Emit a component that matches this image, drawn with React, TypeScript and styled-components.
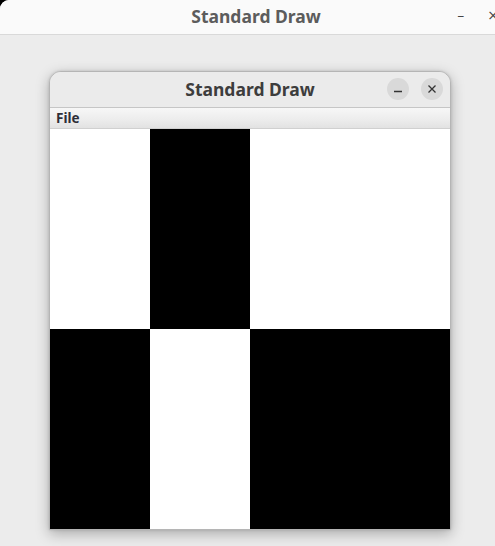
import React from "react";
import styled, { createGlobalStyle } from "styled-components";

const Global = createGlobalStyle`
  html, body { margin: 0; padding: 0; background: #000; overflow: hidden; }
  * { box-sizing: border-box; }
`;

const Screen = styled.div`
  width: 495px;
  height: 546px;
  background: #000;
`;

const Frame = styled.div`
  width: 100%;
  height: 100%;
  background: #ececec;
  border-top-left-radius: 9px;
  overflow: hidden;
  display: flex;
  flex-direction: column;
`;

const OuterBar = styled.div`
  height: 35px;
  flex: none;
  background: #fafafa;
  border-bottom: 1px solid #d9d9d9;
  position: relative;
  display: flex;
  align-items: center;
  justify-content: center;
  padding-left: 17px;
`;

const OuterTitle = styled.div`
  font-family: "Noto Sans", "DejaVu Sans", sans-serif;
  font-weight: 700;
  font-size: 17.5px;
  color: #5c5c5c;
  letter-spacing: 0px;
  margin-top: -2px;
`;

const OuterControls = styled.div`
  position: absolute;
  right: -4px;
  top: 7px;
  display: flex;
  gap: 23px;
  font-family: "DejaVu Sans", sans-serif;
  font-size: 14px;
  color: #444;
`;

const Desktop = styled.div`
  flex: 1;
  padding: 36px 0 0 49px;
`;

const Window = styled.div`
  width: 402px;
  border: 1px solid #b5b5b5;
  border-radius: 12px 12px 0 0;
  background: #ebebeb;
  box-shadow: 0 4px 14px rgba(0, 0, 0, 0.28), 0 0 3px rgba(0, 0, 0, 0.15);
  overflow: hidden;
`;

const TitleBar = styled.div`
  height: 36px;
  background: #ebebeb;
  border-bottom: 1px solid #c6c6c6;
  position: relative;
  display: flex;
  align-items: center;
  justify-content: center;
`;

const Title = styled.div`
  font-family: "Noto Sans", "DejaVu Sans", sans-serif;
  font-weight: 700;
  font-size: 17.5px;
  color: #3d3d3d;
  letter-spacing: 0px;
  margin-top: -1px;
`;

const Controls = styled.div`
  position: absolute;
  right: 7px;
  top: 6px;
  display: flex;
  gap: 12px;
`;

const CircleButton = styled.div`
  width: 22px;
  height: 22px;
  border-radius: 50%;
  background: #d9d9d9;
  display: flex;
  align-items: center;
  justify-content: center;
`;

const MenuBar = styled.div`
  height: 21px;
  background: linear-gradient(#f7f7f7, #ececec 60%, #e2e2e2);
  border-bottom: 1px solid #d0d0d0;
  display: flex;
  align-items: center;
  padding-left: 6px;
`;

const MenuItem = styled.span`
  font-family: "Noto Sans", "DejaVu Sans", sans-serif;
  font-weight: 700;
  font-size: 13.5px;
  color: #2e2e38;
`;

const Canvas = styled.div`
  width: 400px;
  height: 400px;
  display: grid;
  grid-template-columns: repeat(4, 100px);
  grid-template-rows: repeat(2, 200px);
  background: #fff;
`;

const Cell = styled.div<{ $dark: boolean }>`
  background: ${(p) => (p.$dark ? "#000" : "#fff")};
`;

const cells = [false, true, false, false, true, false, true, true];

export default function App() {
  return (
    <Screen>
      <Global />
      <Frame>
        <OuterBar>
          <OuterTitle>Standard Draw</OuterTitle>
          <OuterControls>
            <span>–</span>
            <span>×</span>
          </OuterControls>
        </OuterBar>
        <Desktop>
          <Window>
            <TitleBar>
              <Title>Standard Draw</Title>
              <Controls>
                <CircleButton>
                  <svg width="10" height="10" viewBox="0 0 10 10">
                    <path d="M1 7.5 H9" stroke="#333" strokeWidth="1.3" />
                  </svg>
                </CircleButton>
                <CircleButton>
                  <svg width="10" height="10" viewBox="0 0 10 10">
                    <path d="M1.5 1.5 L8.5 8.5 M8.5 1.5 L1.5 8.5" stroke="#333" strokeWidth="1.3" />
                  </svg>
                </CircleButton>
              </Controls>
            </TitleBar>
            <MenuBar>
              <MenuItem>File</MenuItem>
            </MenuBar>
            <Canvas>
              {cells.map((d, i) => (
                <Cell key={i} $dark={d} />
              ))}
            </Canvas>
          </Window>
        </Desktop>
      </Frame>
    </Screen>
  );
}
